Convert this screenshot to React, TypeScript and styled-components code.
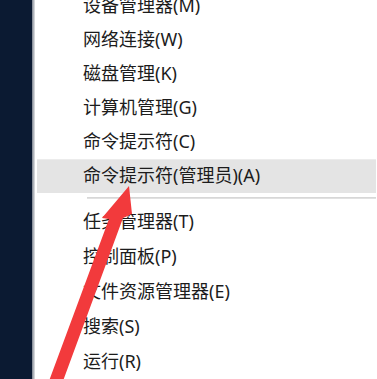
import React from "react";
import styled, { createGlobalStyle } from "styled-components";

const Global = createGlobalStyle`
  html, body { margin: 0; padding: 0; background: #ffffff; }
  body { font-family: "Noto Sans", "Noto Sans CJK SC", sans-serif; }
`;

const Screen = styled.div`
  position: relative;
  width: 377px;
  height: 379px;
  overflow: hidden;
  display: flex;
  background: #ffffff;
`;

const DarkPanel = styled.div`
  width: 32px;
  flex: none;
  background: #0b1a32;
`;

const Edge = styled.div`
  width: 3px;
  flex: none;
  background: linear-gradient(to right, #7c8490, #b9bdc3 60%, #e6e7e9);
`;

const Menu = styled.div`
  flex: 1;
  display: flex;
  flex-direction: column;
  padding: 0 1px 0 2px;
  margin-top: -11px;
`;

const Section = styled.div<{ $pitch: number }>`
  display: flex;
  flex-direction: column;
  & > div {
    height: ${(p) => p.$pitch}px;
  }
`;

const Item = styled.div<{ $active?: boolean }>`
  flex: none;
  display: flex;
  align-items: center;
  padding: 0 0 5px 46px;
  box-sizing: border-box;
  font-family: "Noto Sans", "Noto Sans CJK SC", sans-serif;
  font-size: 18px;
  color: #1c1c1c;
  white-space: nowrap;
  background: ${(p) => (p.$active ? "#e4e4e4" : "transparent")};
  border-top: 1px solid ${(p) => (p.$active ? "#ececec" : "transparent")};
`;

const Separator = styled.div`
  flex: none;
  height: 11px;
  display: flex;
  align-items: center;
  padding-left: 50px;
  padding-bottom: 1px;
  box-sizing: border-box;
  &::after {
    content: "";
    flex: 1;
    height: 2px;
    background: linear-gradient(#d2d2d2, #e6e6e6);
  }
`;

const Arrow = styled.svg`
  position: absolute;
  left: 0;
  top: 0;
  width: 377px;
  height: 379px;
  pointer-events: none;
`;

const topItems = [
  "设备管理器(M)",
  "网络连接(W)",
  "磁盘管理(K)",
  "计算机管理(G)",
  "命令提示符(C)",
];

const bottomItems = [
  "任务管理器(T)",
  "控制面板(P)",
  "文件资源管理器(E)",
  "搜索(S)",
  "运行(R)",
];

export default function App() {
  return (
    <>
      <Global />
      <Screen>
        <DarkPanel />
        <Edge />
        <Menu>
          <Section $pitch={34}>
            {topItems.map((t) => (
              <Item key={t}>{t}</Item>
            ))}
            <Item $active>命令提示符(管理员)(A)</Item>
          </Section>
          <Separator />
          <Section $pitch={35}>
            {bottomItems.map((t) => (
              <Item key={t}>{t}</Item>
            ))}
          </Section>
        </Menu>
        <Arrow viewBox="0 0 377 379">
          <polygon
            points="129,186 132,214 123,218 63,381 49,381 109,219 102,218"
            fill="#f23a3c"
          />
        </Arrow>
      </Screen>
    </>
  );
}
